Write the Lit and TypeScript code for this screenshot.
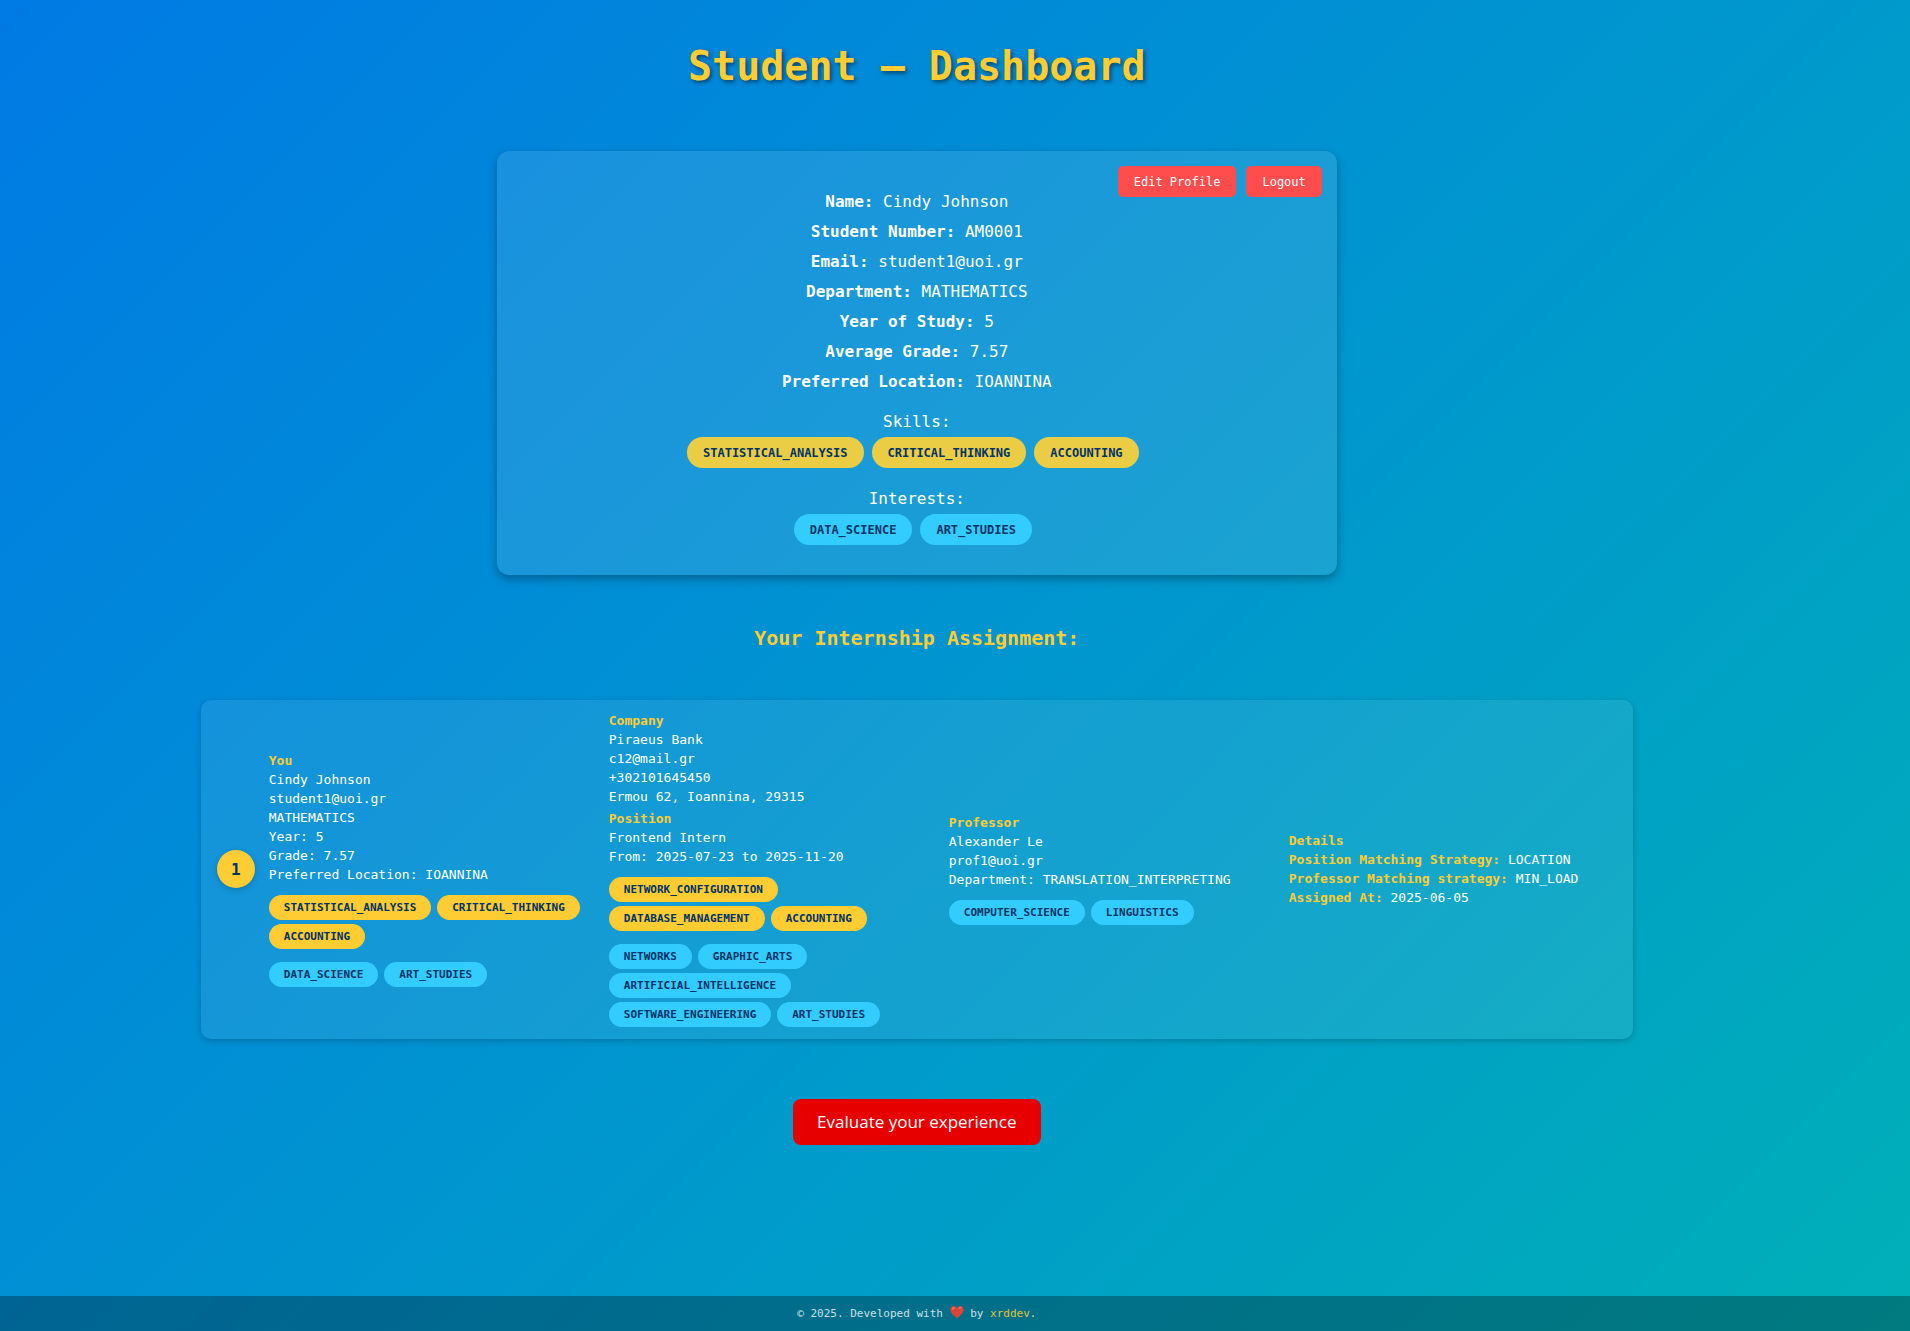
import { LitElement, html, css } from "lit";
import { customElement, property } from "lit/decorators.js";

type TagKind = "skill" | "interest";

@customElement("tag-list")
class TagList extends LitElement {
  @property({ type: Array }) tags: string[] = [];
  @property() kind: TagKind = "skill";
  @property() size: "large" | "small" = "small";

  static styles = css`
    :host {
      display: block;
    }
    .tags {
      display: flex;
      flex-wrap: wrap;
      margin: 0;
      padding: 0;
      list-style: none;
      font-weight: 700;
      color: #003366;
    }
    .tags.small {
      gap: 4px 6px;
      font-size: 11px;
      line-height: 17px;
    }
    .tags.small .tag {
      padding: 4px 15px;
      border-radius: 13px;
    }
    .tags.large {
      justify-content: center;
      font-size: 12px;
      line-height: 15px;
    }
    .tags.large .tag {
      margin-right: 8px;
      padding: 9px 16px 7px;
      border-radius: 16px;
    }
    .tag.skill {
      background: #ffcc33;
    }
    .tags.large .tag.skill {
      background: #ebcd45;
    }
    .tag.interest {
      background: #33ccff;
    }
  `;

  render() {
    return html`<ul class="tags ${this.size}">
      ${this.tags.map((t) => html`<li class="tag ${this.kind}">${t}</li>`)}
    </ul>`;
  }
}

const skills = ["STATISTICAL_ANALYSIS", "CRITICAL_THINKING", "ACCOUNTING"];
const interests = ["DATA_SCIENCE", "ART_STUDIES"];

const profile: [string, string][] = [
  ["Name:", "Cindy Johnson"],
  ["Student Number:", "AM0001"],
  ["Email:", "student1@uoi.gr"],
  ["Department:", "MATHEMATICS"],
  ["Year of Study:", "5"],
  ["Average Grade:", "7.57"],
  ["Preferred Location:", "IOANNINA"],
];

const strategy: [string, string][] = [
  ["Position Matching Strategy:", "LOCATION"],
  ["Professor Matching strategy:", "MIN_LOAD"],
  ["Assigned At:", "2025-06-05"],
];

@customElement("app-root")
class AppRoot extends LitElement {
  static styles = css`
    :host {
      display: flex;
      flex-direction: column;
      min-height: 100vh;
      color: #fff;
      font-family: "DejaVu Sans Mono", "Liberation Mono", monospace;
      background: linear-gradient(135deg, #007ae4 0%, #0099cc 58%, #00b0b7 100%);
    }
    h1,
    h2,
    h3,
    p {
      margin: 0;
    }
    .content {
      flex: 1;
      display: flex;
      flex-direction: column;
      align-items: center;
      padding: 39px 4% 40px 0;
    }
    .title {
      font-size: 40px;
      line-height: 54px;
      color: #ffcc33;
      text-shadow: 2px 2px 4px rgba(0, 0, 0, 0.5);
    }
    .profile {
      position: relative;
      box-sizing: border-box;
      width: 100%;
      max-width: 840px;
      margin-top: 58px;
      padding: 36px 20px 30px;
      border-radius: 12px;
      background: rgba(255, 255, 255, 0.1);
      box-shadow: 0 4px 10px rgba(0, 0, 0, 0.3);
      text-align: center;
      font-size: 16px;
      line-height: 30px;
    }
    .actions {
      position: absolute;
      top: 15px;
      right: 15px;
      display: flex;
      gap: 10px;
    }
    .action {
      padding: 9px 16px 7px;
      border: 0;
      border-radius: 5px;
      background: #ff4d4d;
      color: #fff;
      font: 12px/15px "DejaVu Sans Mono", "Liberation Mono", monospace;
      cursor: pointer;
    }
    .group-label {
      margin-top: 10px;
    }
    tag-list + .group-label {
      margin-top: 16px;
    }
    .section-title {
      margin-top: 48px;
      font-size: 20px;
      line-height: 30px;
      color: #ffcc33;
    }
    .assignment {
      box-sizing: border-box;
      display: flex;
      align-items: center;
      gap: 14px;
      width: 100%;
      max-width: 1432px;
      margin-top: 47px;
      padding: 11px 16px 12px;
      border-radius: 10px;
      background: rgba(255, 255, 255, 0.08);
      box-shadow: 0 2px 6px rgba(0, 0, 0, 0.2);
      font-size: 13px;
      line-height: 19px;
    }
    .rank {
      flex: none;
      display: grid;
      place-items: center;
      width: 38px;
      height: 38px;
      border-radius: 50%;
      background: #ffcc33;
      color: #003366;
      box-shadow: 0 2px 6px rgba(0, 0, 0, 0.2);
      font-size: 16px;
      font-weight: 700;
    }
    .columns {
      flex: 1;
      display: grid;
      grid-template-columns: repeat(4, minmax(0, 1fr));
      align-items: center;
      gap: 12px;
    }
    .label {
      font-size: 13px;
      font-weight: 700;
      color: #ffcc33;
    }
    p + .label {
      margin-top: 3px;
    }
    .columns tag-list {
      margin-top: 11px;
    }
    .columns tag-list + tag-list {
      margin-top: 13px;
    }
    .evaluate {
      margin-top: 60px;
      padding: 12px 24px;
      border: 0;
      border-radius: 8px;
      background: #e60000;
      color: #fff;
      font: 400 17px/22px "Open Sans", "Noto Sans", sans-serif;
      cursor: pointer;
    }
    .footer {
      display: flex;
      justify-content: center;
      padding: 8px 4% 8px 0;
      background: rgba(0, 0, 0, 0.3);
      color: rgba(255, 255, 255, 0.8);
      font-size: 11px;
      line-height: 19px;
    }
    .heart {
      width: 14px;
      height: 14px;
      vertical-align: -2px;
    }
    .author {
      color: #e0c33c;
      text-decoration: none;
    }
  `;

  render() {
    return html`
      <main class="content">
        <h1 class="title">Student – Dashboard</h1>

        <section class="profile">
          <div class="actions">
            <button class="action" type="button">Edit Profile</button>
            <button class="action" type="button">Logout</button>
          </div>
          ${profile.map(([k, v]) => html`<p><strong>${k}</strong> ${v}</p>`)}
          <p class="group-label">Skills:</p>
          <tag-list size="large" kind="skill" .tags=${skills}></tag-list>
          <p class="group-label">Interests:</p>
          <tag-list size="large" kind="interest" .tags=${interests}></tag-list>
        </section>

        <h2 class="section-title">Your Internship Assignment:</h2>

        <section class="assignment">
          <div class="rank">1</div>
          <div class="columns">
            <div>
              <h3 class="label">You</h3>
              <p>Cindy Johnson</p>
              <p>student1@uoi.gr</p>
              <p>MATHEMATICS</p>
              <p>Year: 5</p>
              <p>Grade: 7.57</p>
              <p>Preferred Location: IOANNINA</p>
              <tag-list kind="skill" .tags=${skills}></tag-list>
              <tag-list kind="interest" .tags=${interests}></tag-list>
            </div>
            <div>
              <h3 class="label">Company</h3>
              <p>Piraeus Bank</p>
              <p>c12@mail.gr</p>
              <p>+302101645450</p>
              <p>Ermou 62, Ioannina, 29315</p>
              <h3 class="label">Position</h3>
              <p>Frontend Intern</p>
              <p>From: 2025-07-23 to 2025-11-20</p>
              <tag-list
                kind="skill"
                .tags=${["NETWORK_CONFIGURATION", "DATABASE_MANAGEMENT", "ACCOUNTING"]}
              ></tag-list>
              <tag-list
                kind="interest"
                .tags=${[
                  "NETWORKS",
                  "GRAPHIC_ARTS",
                  "ARTIFICIAL_INTELLIGENCE",
                  "SOFTWARE_ENGINEERING",
                  "ART_STUDIES",
                ]}
              ></tag-list>
            </div>
            <div>
              <h3 class="label">Professor</h3>
              <p>Alexander Le</p>
              <p>prof1@uoi.gr</p>
              <p>Department: TRANSLATION_INTERPRETING</p>
              <tag-list
                kind="interest"
                .tags=${["COMPUTER_SCIENCE", "LINGUISTICS"]}
              ></tag-list>
            </div>
            <div>
              <h3 class="label">Details</h3>
              ${strategy.map(
                ([k, v]) => html`<p><strong class="label">${k}</strong> ${v}</p>`
              )}
            </div>
          </div>
        </section>

        <button class="evaluate" type="button">Evaluate your experience</button>
      </main>

      <footer class="footer">
        <p>
          © 2025. Developed with
          <svg class="heart" viewBox="0 0 14 14" role="img" aria-label="love">
            <path
              d="M7 13.4C5.2 11.6 0.3 8.4 0.3 4.6C0.3 2.3 1.9 0.9 3.8 0.9C5.3 0.9 6.4 1.7 7 3C7.6 1.7 8.7 0.9 10.2 0.9C12.1 0.9 13.7 2.3 13.7 4.6C13.7 8.4 8.8 11.6 7 13.4Z"
              fill="#db4437"
            />
            <ellipse cx="3.4" cy="3.4" rx="1.6" ry="1" transform="rotate(-35 3.4 3.4)" fill="#e8776d" />
            <ellipse cx="10" cy="3" rx="1.5" ry="0.8" transform="rotate(-20 10 3)" fill="#e8776d" />
          </svg>
          by <a class="author" href="#">xrddev</a>.
        </p>
      </footer>
    `;
  }
}
